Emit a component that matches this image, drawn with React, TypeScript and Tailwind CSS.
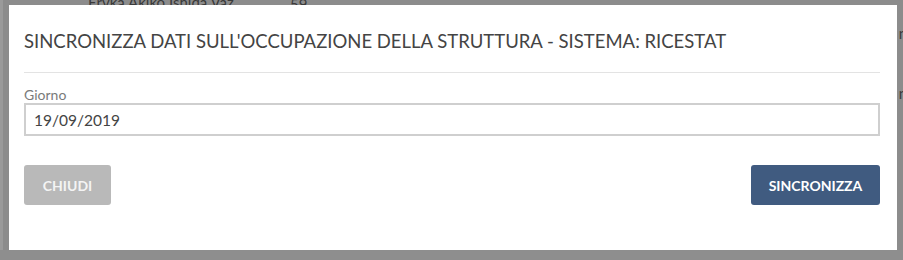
import React from "react";

const App: React.FC = () => {
  return (
    <div className="relative h-[260px] w-[903px] overflow-hidden bg-[#8c8c8c] font-['Lato',sans-serif]">
      {/* page behind the overlay */}
      <div className="absolute left-[88px] top-[-9px] text-[15px] text-[#3a3a3a]">Eryka Akiko Ishida Vaz</div>
      <div className="absolute left-[290px] top-[-7px] text-[15px] text-[#3a3a3a]">59</div>
      <div className="absolute right-[-4px] top-[22px] text-[15px] text-[#3a3a3a]">n</div>
      <div className="absolute right-[-4px] top-[82px] text-[15px] text-[#3a3a3a]">n</div>
      <div className="absolute left-0 top-0 h-full w-[3px] bg-[#9a9a9a]" />
      <div className="absolute bottom-0 left-0 h-[10px] w-full bg-[#8e8e8e]" />

      {/* modal */}
      <div className="absolute left-[9px] top-[5px] flex h-[245px] w-[888px] flex-col bg-white pl-[15px] pr-[17px]">
        <h2 className="pt-[25px] text-[18.5px] leading-[22px] text-[#444]">
          SINCRONIZZA DATI SULL'OCCUPAZIONE DELLA STRUTTURA - SISTEMA: RICESTAT
        </h2>
        <div className="mt-[20px] h-px bg-[#e3e3e3]" />
        <label className="mt-[14px] text-[14px] leading-[16px] text-[#7a7a7a]">Giorno</label>
        <input
          type="text"
          defaultValue="19/09/2019"
          className="h-[33px] w-full border-2 border-[#cfcfcf] px-[8px] text-[15.5px] text-[#444] outline-none"
        />
        <div className="mt-[29px] flex justify-between">
          <button className="h-[40px] w-[87px] rounded-[3px] bg-[#b9b9b9] text-[14px] font-bold text-[#f4f4f4]">
            CHIUDI
          </button>
          <button className="h-[40px] w-[129px] rounded-[3px] bg-[#405b80] text-[14px] font-bold text-white">
            SINCRONIZZA
          </button>
        </div>
      </div>
    </div>
  );
};

export default App;
